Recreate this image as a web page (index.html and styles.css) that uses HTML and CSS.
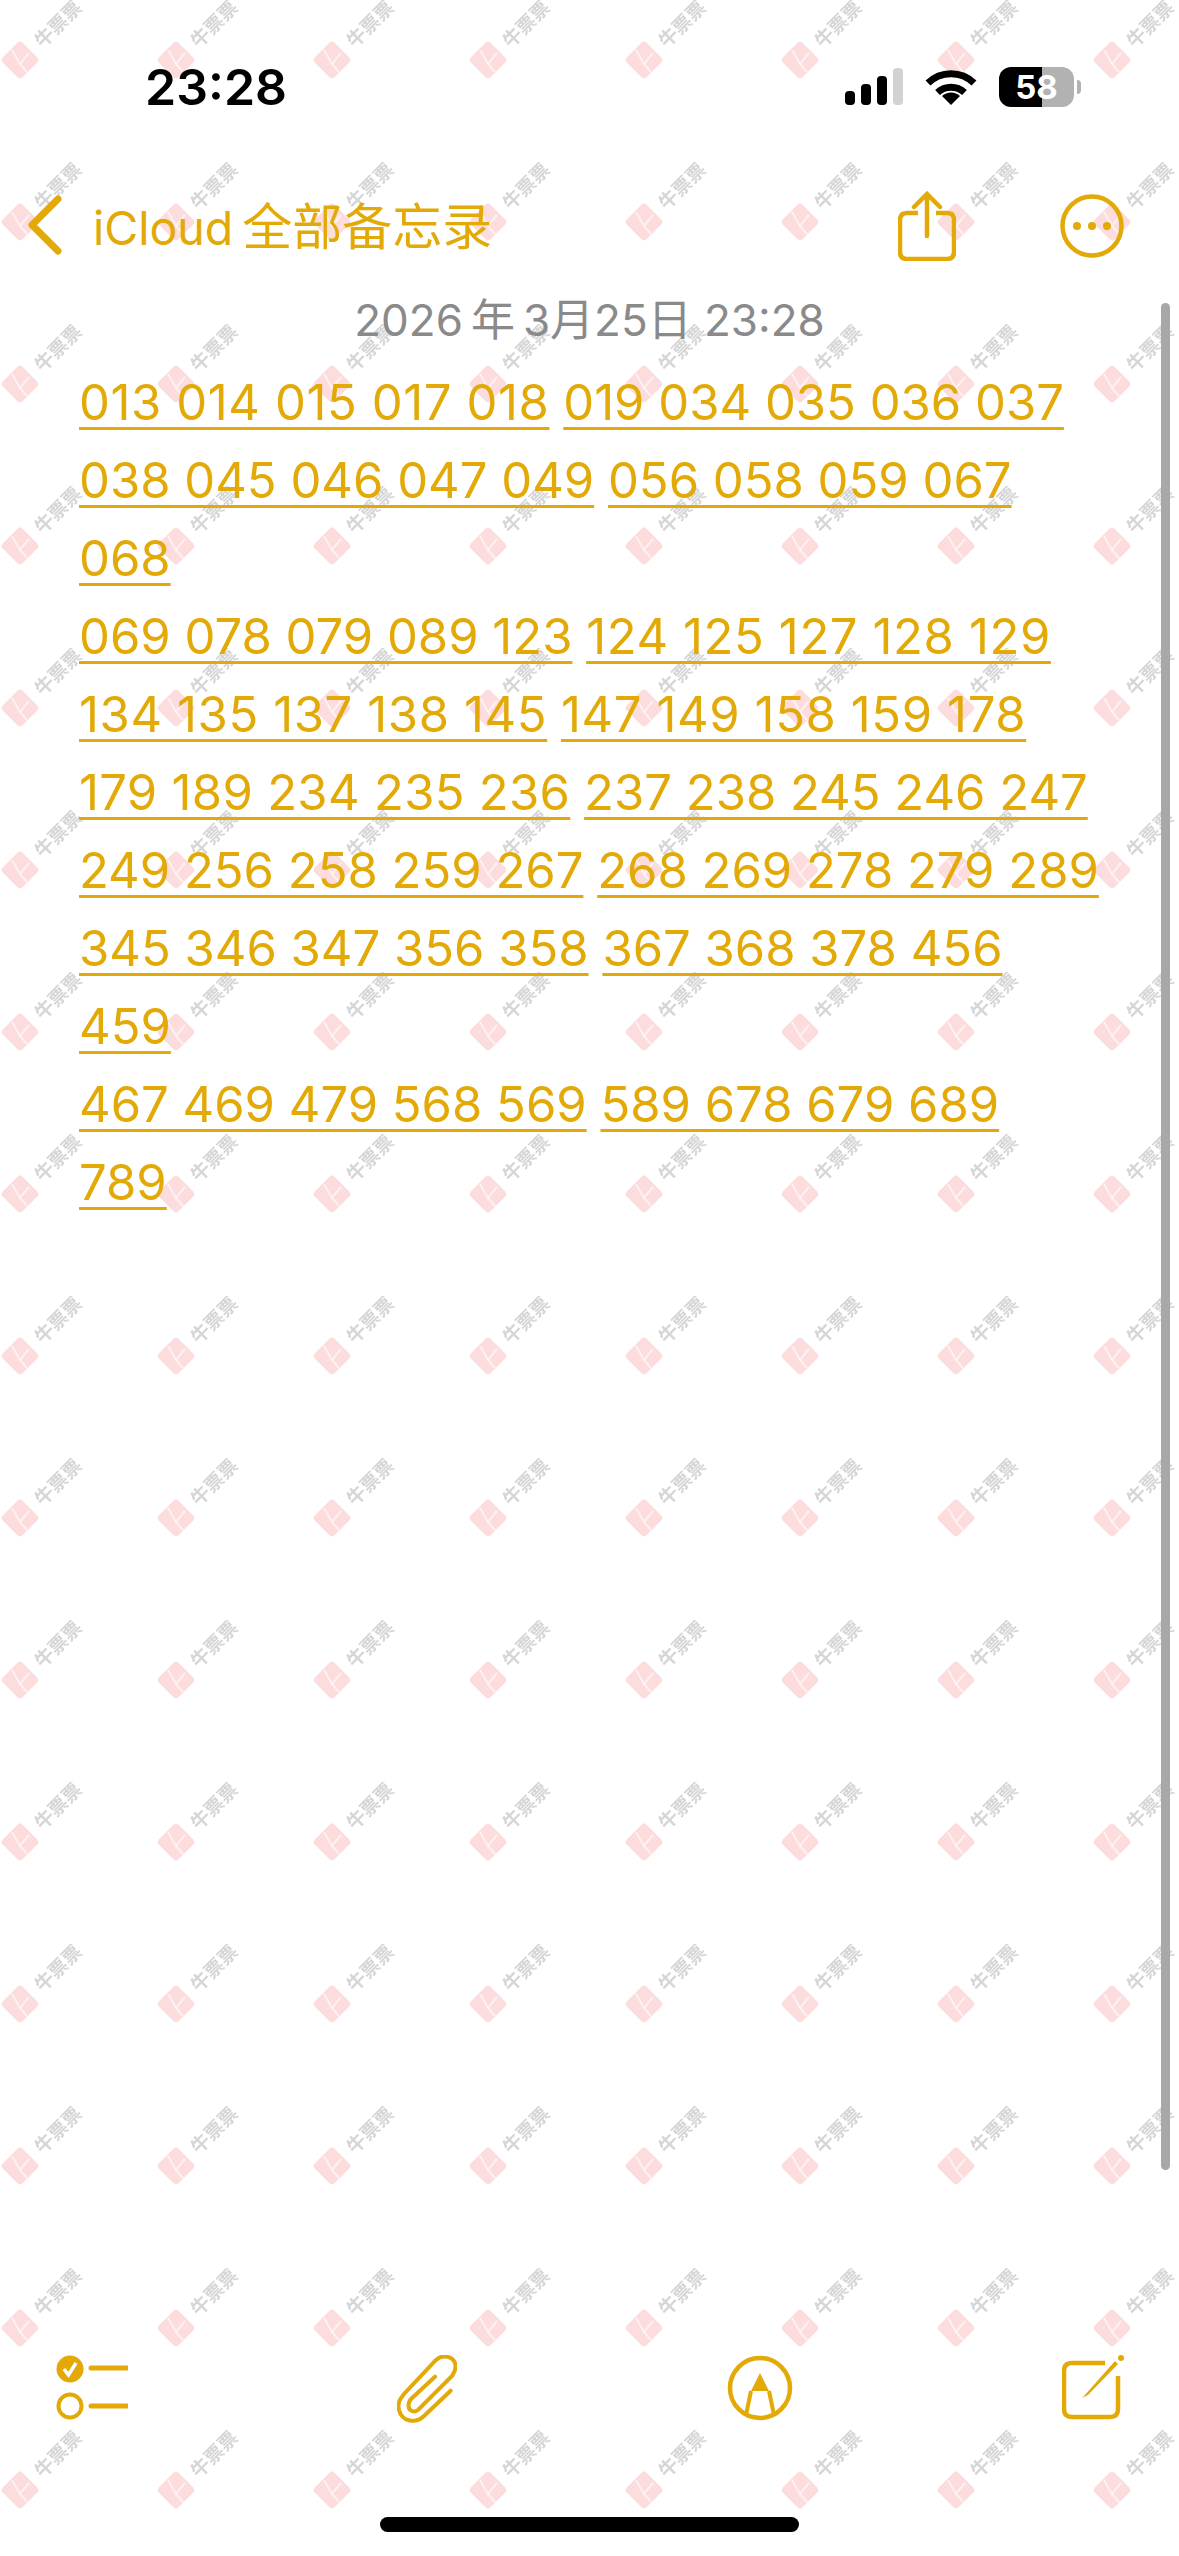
FILE: index.html
```html
<!DOCTYPE html>
<html lang="zh-CN">
<head>
    <meta charset="UTF-8">
    <meta name="viewport" content="width=device-width, initial-scale=1.0">
    <title>备忘录</title>
    <link rel="stylesheet" href="styles.css">
</head>
<body>

<div class="page">
    <!-- Marca d'água repetida -->
    <svg class="watermark" width="1179" height="2556" aria-hidden="true">
        <defs>
            <pattern id="wm" patternUnits="userSpaceOnUse" width="156" height="162">
                <rect x="6" y="46" width="28" height="28" rx="4" transform="rotate(45 20 60)" fill="#fcdcdc"/>
                <path d="M12 50 L20 64 L29 53 M20 64 L27 72" fill="none" stroke="#fff" stroke-width="2" opacity="0.6"/>
                <text x="58" y="31" transform="rotate(-45 58 24)" text-anchor="middle" class="wm-text">牛票票</text>
            </pattern>
        </defs>
        <rect width="1179" height="2556" fill="url(#wm)"/>
    </svg>

    <div class="status-bar">
        <span class="time">23:28</span>
        <div class="status-icons">
            <svg width="58" height="38" viewBox="0 0 58 38">
                <rect x="0" y="23" width="10" height="14" rx="4" fill="#000"/>
                <rect x="16" y="16" width="10" height="21" rx="4" fill="#000"/>
                <rect x="32" y="8" width="10" height="29" rx="4" fill="#000"/>
                <rect x="48" y="0" width="10" height="37" rx="4" fill="#d2d2d2"/>
            </svg>
            <svg width="52" height="38" viewBox="0 0 52 38">
                <path d="M3 15 A33 33 0 0 1 49 15" fill="none" stroke="#000" stroke-width="7"/>
                <path d="M12.5 24.5 A20 20 0 0 1 39.5 24.5" fill="none" stroke="#000" stroke-width="7"/>
                <path d="M26 37 L17 28 A13 13 0 0 1 35 28 Z" fill="#000"/>
            </svg>
            <div class="battery"><span>58</span></div>
        </div>
    </div>

    <div class="nav-bar">
        <div class="nav-back">
            <svg width="36" height="62" viewBox="0 0 36 62">
                <path d="M30 4 L4 30 L30 56" fill="none" stroke="#e2a907" stroke-width="7" stroke-linecap="round" stroke-linejoin="round"/>
            </svg>
            <span class="nav-title">iCloud<span class="nav-cjk">全部备忘录</span></span>
        </div>
        <div class="nav-actions">
            <svg width="58" height="70" viewBox="0 0 58 70" fill="none" stroke="#e2a907" stroke-width="4.5">
                <path d="M20 22 H9 Q2 22 2 29 V61 Q2 68 9 68 H49 Q56 68 56 61 V29 Q56 22 49 22 H38"/>
                <path d="M29 45 V3 M16 16 L29 3 L42 16" stroke-linecap="round"/>
            </svg>
            <svg width="64" height="64" viewBox="0 0 64 64">
                <circle cx="32" cy="32" r="29.5" fill="none" stroke="#e2a907" stroke-width="4.5"/>
                <circle cx="17" cy="32" r="4" fill="#e2a907"/>
                <circle cx="32" cy="32" r="4" fill="#e2a907"/>
                <circle cx="47" cy="32" r="4" fill="#e2a907"/>
            </svg>
        </div>
    </div>

    <div class="note-date">2026&#8201;年&#8201;3月25日 23:28</div>

    <div class="note-body">
        <a class="ones5">013 014 015 017 018</a> <a>019 034 035 036 037</a><br>
        <a>038 045 046 047 049</a> <a>056 058 059 067<br>068</a><br>
        <a>069 078 079 089 123</a> <a class="ones5">124 125 127 128 129</a><br>
        <a class="ones5">134 135 137 138 145</a> <a class="ones5">147 149 158 159 178</a><br>
        <a class="ones2">179 189 234 235 236</a> <a>237 238 245 246 247</a><br>
        <a>249 256 258 259 267</a> <a>268 269 278 279 289</a><br>
        <a>345 346 347 356 358</a> <a>367 368 378 456<br>459</a><br>
        <a>467 469 479 568 569</a> <a>589 678 679 689<br>789</a>
    </div>

    <div class="toolbar">
        <svg width="72" height="68" viewBox="0 0 72 68">
            <circle cx="14" cy="14" r="13.5" fill="#e2a907"/>
            <path d="M8 14 L12.5 20 L20 8" fill="none" stroke="#fff" stroke-width="3.5"/>
            <path d="M35 13 H71" stroke="#e2a907" stroke-width="5" stroke-linecap="round"/>
            <circle cx="14" cy="51" r="11.5" fill="none" stroke="#e2a907" stroke-width="4"/>
            <path d="M35 51 H71" stroke="#e2a907" stroke-width="5" stroke-linecap="round"/>
        </svg>
        <svg width="60" height="68" viewBox="0 0 60 68">
            <path d="M53.6 35.700 L27 61 C19 69 5 67 2 55 C0 47 4 43 7 39 L39 5 C45 -1 55 1 58 8 C60 14 57 18 55 21 L21 55 C17 58 12 56 11.500 51 C11.500 48 12 46 14 44 L38 21.700" fill="none" stroke="#e2a907" stroke-width="4" stroke-linecap="round"/>
        </svg>
        <svg width="66" height="68" viewBox="0 0 66 68">
            <circle cx="33" cy="33" r="30" fill="none" stroke="#e2a907" stroke-width="4.5"/>
            <path d="M33 18 L24 36 H42 Z" fill="#e2a907"/>
            <path d="M24 36 L19 60 M42 36 L47 60" fill="none" stroke="#e2a907" stroke-width="4"/>
        </svg>
        <svg width="62" height="68" viewBox="0 0 62 68">
            <path d="M43 8 H10 Q2 8 2 16 V54 Q2 62 10 62 H48 Q56 62 56 54 V21" fill="none" stroke="#e2a907" stroke-width="4.5"/>
            <path d="M22 41 L53 6 L56 9 L26 40 L20 43 Z" fill="#e2a907"/>
            <circle cx="59" cy="3" r="3" fill="#e2a907"/>
        </svg>
    </div>

    <div class="home-indicator"></div>
    <div class="scroll-thumb"></div>
</div>

</body>
</html>
```

FILE: styles.css
```css
body {
    margin: 0;
    background-color: #fff;
    font-family: Inter, "Noto Sans CJK SC", sans-serif;
}
.page {
    position: relative;
    width: 1179px;
    height: 2556px;
    display: flex;
    flex-direction: column;
    overflow: hidden;
}
.page > * {
    position: relative;
}
.page > .watermark {
    position: absolute;
    top: 0;
    left: 0;
    filter: blur(0.7px);
}
.wm-text {
    font-family: "Noto Sans CJK SC", sans-serif;
    font-size: 19px;
    font-weight: 700;
    fill: #d6d6d6;
}
.status-bar {
    display: flex;
    justify-content: space-between;
    align-items: center;
    height: 40px;
    margin-top: 67px;
    padding: 0 98px 0 145px;
}
.time {
    font-size: 50px;
    font-weight: 600;
    color: #000;
}
.status-icons {
    display: flex;
    align-items: center;
    gap: 22px;
}
.battery {
    position: relative;
    width: 75px;
    height: 40px;
    border-radius: 12px;
    background: linear-gradient(90deg, #000 57%, #b2b2b2 57%);
    display: flex;
    justify-content: center;
    align-items: center;
    margin-right: 7px;
}
.battery span {
    font-size: 33px;
    font-weight: 700;
    color: #fff;
}
.battery::after {
    content: "";
    position: absolute;
    top: 13px;
    right: -7px;
    width: 4px;
    height: 14px;
    border-radius: 0 6px 6px 0;
    background-color: #b2b2b2;
}
.nav-bar {
    display: flex;
    justify-content: space-between;
    align-items: center;
    height: 70px;
    margin-top: 84px;
    padding: 0 55px 0 28px;
    color: #e2a907;
}
.nav-back {
    display: flex;
    align-items: center;
    gap: 29px;
    font-size: 46.500px;
}
.nav-title {
    padding-bottom: 6px;
}
.nav-cjk {
    font-size: 50px;
    margin-left: 9px;
}
.nav-actions {
    display: flex;
    align-items: center;
    gap: 104px;
}
.note-date {
    margin-top: 29px;
    font-size: 44px;
    line-height: 60px;
    text-align: center;
    color: #8a8a8a;
}
.note-body {
    margin-top: 14px;
    padding-left: 79px;
    font-size: 49px;
    line-height: 78px;
    color: #e2a907;
}
.note-body a {
    text-decoration: underline;
    text-decoration-thickness: 3px;
    text-underline-offset: 7px;
}
/* grupos com muitos "1" ficam estreitos demais no Inter */
.note-body .ones5 {
    letter-spacing: 0.6px;
}
.note-body .ones2 {
    letter-spacing: 0.3px;
}
.toolbar {
    display: flex;
    justify-content: space-between;
    margin-top: auto;
    padding: 0 55px 0 56px;
}
.home-indicator {
    width: 419px;
    height: 15px;
    margin: 94px auto 24px;
    border-radius: 8px;
    background-color: #000;
}
.page > .scroll-thumb {
    position: absolute;
    top: 303px;
    right: 9px;
    width: 9px;
    height: 1867px;
    border-radius: 5px;
    background-color: #a8a8a8;
}
```
